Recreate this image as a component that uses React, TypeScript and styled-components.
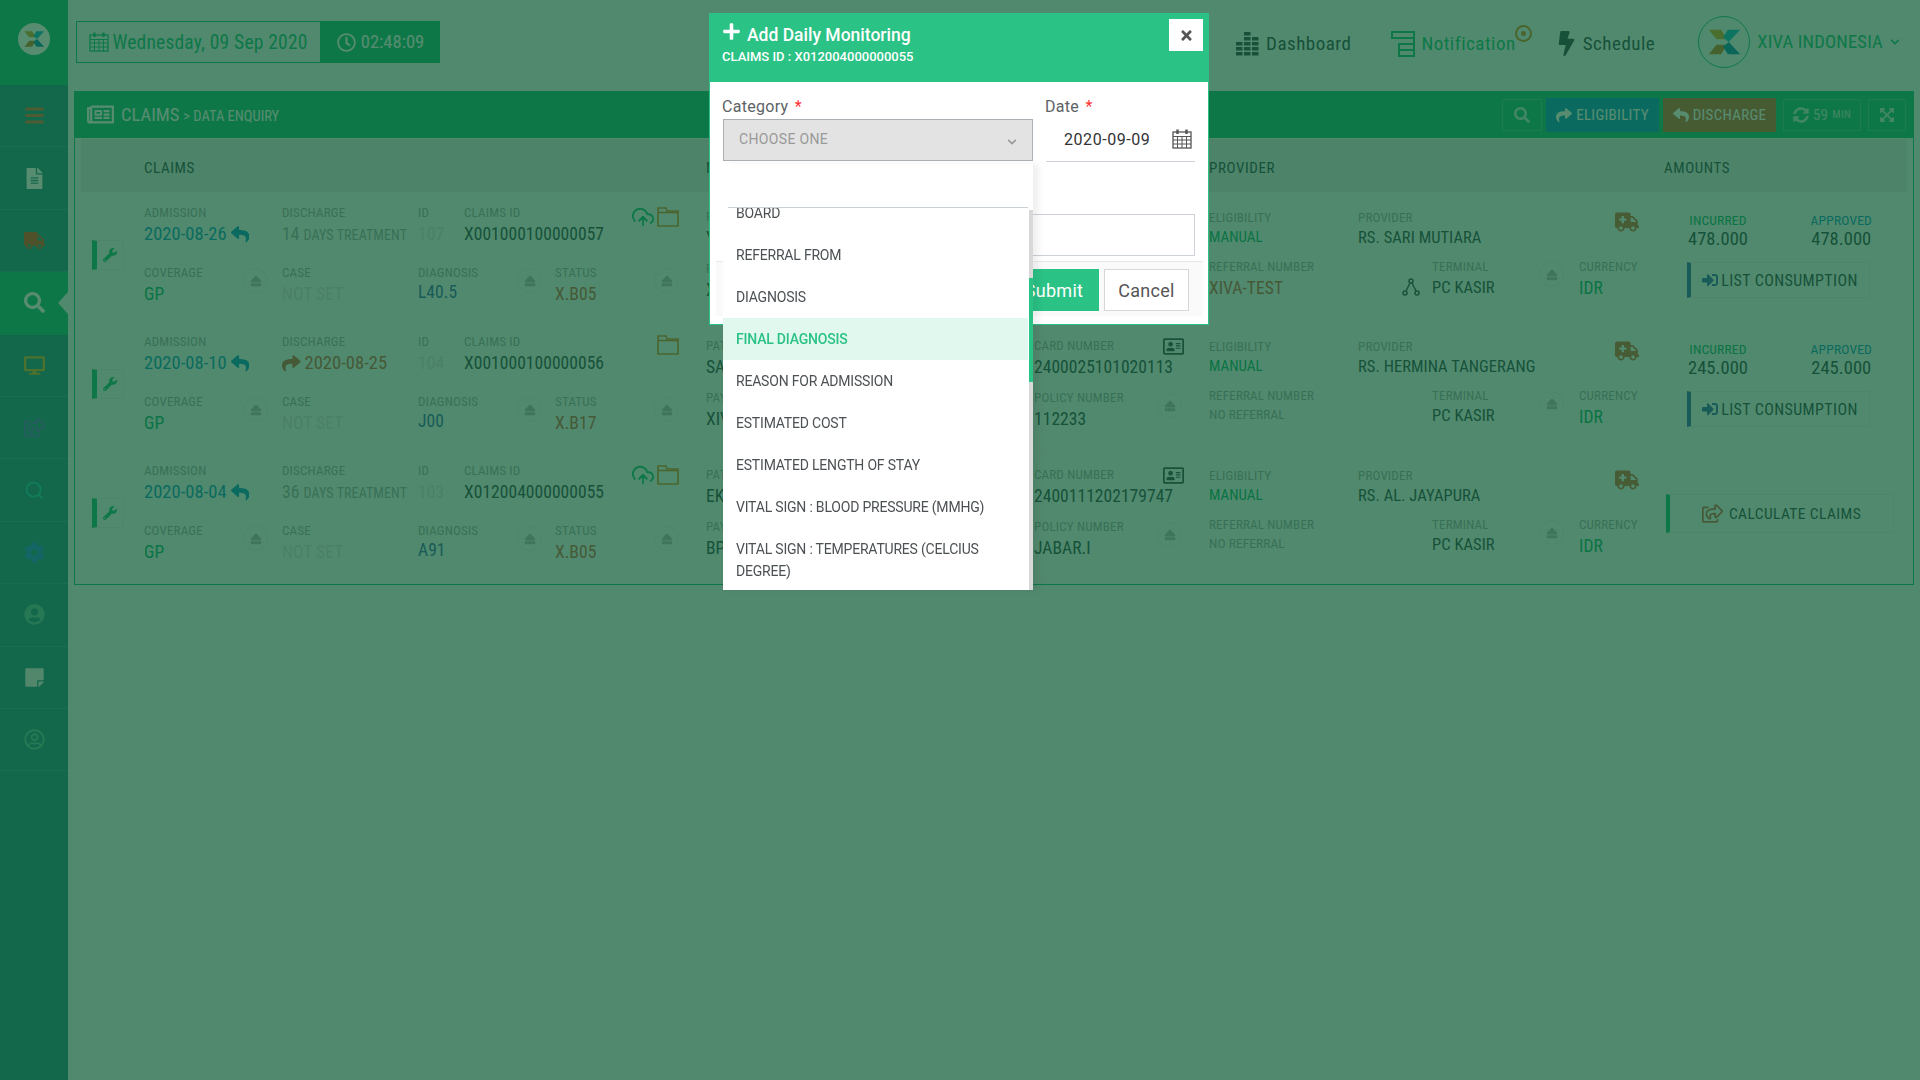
import React from 'react';
import styled, { createGlobalStyle } from 'styled-components';
import {
  FaBars, FaBolt, FaCog, FaDesktop, FaEject, FaExpandArrowsAlt, FaFileAlt, FaPlus,
  FaRegAddressCard, FaRegClock, FaRegNewspaper, FaRegShareSquare, FaRegUserCircle, FaReply,
  FaSearch, FaShare, FaSignInAlt, FaStickyNote, FaSyncAlt, FaTimes, FaTruck, FaUserCircle, FaWrench,
  FaAmbulance, FaChevronDown,
} from 'react-icons/fa';
import { FiUploadCloud, FiSearch } from 'react-icons/fi';

const primary = '#2bc286';
const pageBg = '#eef5f6';
const narrow = 'Roboto, "Open Sans", sans-serif';
const soft = 'Roboto, "Noto Sans", sans-serif';

const tones: Record<string, string> = {
  blue: '#1f9cc9',
  green: '#22b67c',
  navy: '#4a6fb5',
  red: '#c96a55',
  dark: '#44545c',
  grey: '#a5adb0',
  faint: '#d8dcde',
};

const GlobalStyle = createGlobalStyle`
  html, body { margin: 0; padding: 0; height: 100%; overflow: hidden; }
  body { background: ${pageBg}; font-family: ${narrow}; font-stretch: 75%; color: #44545c; }
  * { box-sizing: border-box; }
`;

const Page = styled.div`
  display: flex;
  width: 1920px;
  height: 1080px;
`;

const Sidebar = styled.aside`
  width: 68px;
  flex: none;
  background: #3a9490;
`;

const SideLogo = styled.div`
  height: 85px;
  background: ${primary};
  display: flex;
  align-items: flex-start;
  justify-content: center;
  padding-top: 23px;
`;

const LogoDisc = styled.div`
  width: 32px;
  height: 32px;
  border-radius: 50%;
  background: #fff;
  display: flex;
  align-items: center;
  justify-content: center;
`;

const SideItem = styled.div<{ $active?: boolean; $color: string }>`
  position: relative;
  height: 62.4px;
  display: flex;
  align-items: center;
  justify-content: center;
  color: ${(p) => p.$color};
  font-size: 21px;
  background: ${(p) => (p.$active ? primary : 'transparent')};
  border-bottom: 1px solid ${(p) => (p.$active ? primary : '#4ea69c')};
  ${(p) =>
    p.$active &&
    `&::after {
      content: '';
      position: absolute;
      right: 0;
      top: 20px;
      border-style: solid;
      border-width: 11px 10px 11px 0;
      border-color: transparent ${pageBg} transparent transparent;
    }`}
`;

const Main = styled.main`
  flex: 1;
  min-width: 0;
  padding-right: 6px;
`;

const TopBar = styled.header`
  height: 91px;
  display: flex;
  align-items: flex-start;
  padding: 21px 0 0 8px;
`;

const DateBox = styled.div`
  width: 245px;
  height: 42px;
  border: 1px solid ${primary};
  display: flex;
  align-items: center;
  justify-content: center;
  gap: 3px;
  color: ${primary};
  font-size: 19.5px;
  letter-spacing: 0.2px;
  white-space: nowrap;
`;

const TimeBox = styled(DateBox)`
  width: 119px;
  background: ${primary};
  color: #fff;
  gap: 5px;
  font-size: 18.5px;
  letter-spacing: 0;
`;

const Nav = styled.nav`
  margin-left: auto;
  display: flex;
  align-items: center;
  height: 42px;
  margin-right: 14px;
`;

const NavLink = styled.div<{ $color: string; $gap: number; $left: number }>`
  display: flex;
  align-items: center;
  gap: ${(p) => p.$gap}px;
  margin-left: ${(p) => p.$left}px;
  color: ${(p) => p.$color};
  font-size: 19px;
  letter-spacing: 0.5px;
  padding-top: 3px;
`;

const NavDot = styled.span`
  width: 17px;
  height: 17px;
  border-radius: 50%;
  border: 2px solid #d98a3a;
  display: flex;
  align-items: center;
  justify-content: center;
  margin: -20px 0 0 -7px;
  &::after {
    content: '';
    width: 5px;
    height: 5px;
    border-radius: 50%;
    background: #d98a3a;
  }
`;

const Brand = styled.div`
  display: flex;
  align-items: center;
  gap: 7px;
  margin-left: 43px;
  color: ${primary};
  font-size: 18.5px;
  letter-spacing: 0.2px;
`;

const BrandRing = styled.div`
  width: 52px;
  height: 52px;
  border-radius: 50%;
  border: 1px solid ${primary};
  display: flex;
  align-items: center;
  justify-content: center;
`;

const Panel = styled.section`
  margin-left: 6px;
  height: 494px;
  display: flex;
  flex-direction: column;
  border: 1px solid ${primary};
  border-top: none;
`;

const PanelHead = styled.div`
  height: 47px;
  margin: 0 -1px;
  background: ${primary};
  color: #fff;
  display: flex;
  align-items: center;
  padding: 0 8px 0 13px;
`;

const Crumb = styled.div`
  display: flex;
  align-items: center;
  gap: 7px;
  font-size: 18.5px;
  flex: 1;
  small {
    font-size: 14.5px;
    margin-left: -3px;
    padding-top: 3px;
  }
`;

const HeadButton = styled.div<{ $bg?: string; $w: number }>`
  width: ${(p) => p.$w}px;
  height: ${(p) => (p.$bg ? 34 : 32)}px;
  margin-left: ${(p) => (p.$bg ? 4 : 7)}px;
  background: ${(p) => p.$bg || 'transparent'};
  color: ${(p) => (p.$bg ? '#fff' : 'rgba(255,255,255,.7)')};
  border: ${(p) => (p.$bg ? 'none' : '1px solid rgba(255,255,255,.2)')};
  display: flex;
  align-items: center;
  justify-content: center;
  gap: 4px;
  font-size: 15px;
  letter-spacing: 0.3px;
  svg { font-size: 16px; }
  small { font-size: 11px; }
`;

const TableHead = styled.div`
  height: 53px;
  margin: 1px 6px 0;
  background: #e2e5e7;
  display: flex;
  align-items: center;
  font-size: 15px;
  letter-spacing: 0.6px;
  color: #44545c;
  padding-top: 4px;
`;

const HeadCell = styled.div<{ $w: number; $pad: number }>`
  width: ${(p) => p.$w}px;
  padding-left: ${(p) => p.$pad}px;
`;

const Row = styled.div`
  height: 129px;
  margin: 0 6px;
  display: flex;
  border-bottom: 1px solid #eceff0;
`;

const ToolCell = styled.div`
  width: 50px;
  padding: 48px 0 0 11px;
`;

const ToolButton = styled.div`
  width: 32px;
  height: 30px;
  border: 1px solid #e3e6e8;
  border-left: 5px solid ${primary};
  display: flex;
  align-items: center;
  justify-content: center;
  color: ${primary};
  font-size: 14px;
`;

const ClaimsCell = styled.div`
  position: relative;
  width: 565px;
  padding: 14px 0 0 12px;
  border-left: 1px solid #eceff0;
`;

const Fields = styled.div<{ $cols: string; $h: number }>`
  display: grid;
  grid-template-columns: ${(p) => p.$cols};
  height: ${(p) => p.$h}px;
`;

const Label = styled.div`
  font-size: 13px;
  line-height: 14px;
  letter-spacing: 0.2px;
  color: #a5adb0;
  white-space: nowrap;
`;

const Value = styled.div<{ $tone?: string; $size?: number; $top?: number }>`
  margin-top: ${(p) => p.$top ?? 3}px;
  font-size: ${(p) => p.$size || 17.5}px;
  line-height: 22px;
  letter-spacing: 0.05px;
  color: ${(p) => tones[p.$tone || 'dark']};
  white-space: nowrap;
  display: flex;
  align-items: center;
  gap: 4px;
  small {
    font-size: 14px;
    color: #a5adb0;
    letter-spacing: 0.1px;
  }
`;

const EjectField = styled.div`
  display: flex;
  justify-content: space-between;
  width: 124px;
`;

const EjectBadge = styled.span`
  width: 25px;
  height: 25px;
  margin-top: 2px;
  border-radius: 50%;
  border: 1px solid #e6e9ea;
  display: flex;
  align-items: center;
  justify-content: center;
  color: #b5bcbf;
  font-size: 12px;
  flex: none;
`;

const RowTools = styled.div`
  position: absolute;
  right: 17px;
  top: 14px;
  display: flex;
  align-items: center;
  gap: 3px;
  font-size: 22px;
`;

const MemberCell = styled.div`
  width: 502px;
  padding: 18px 0 0 9px;
  border-left: 1px solid #eceff0;
`;

const CardField = styled.div`
  display: grid;
  grid-template-columns: minmax(0, 1fr) auto;
  align-items: start;
  width: 148px;
`;

const CardIcon = styled.span`
  color: #44545c;
  font-size: 21px;
  line-height: 20px;
  margin-top: -3px;
  margin-right: -2px;
`;

const ProviderCell = styled.div`
  width: 453px;
  padding: 19px 0 0 10px;
  border-left: 1px solid #eceff0;
`;

const Ambulance = styled.span`
  color: #d0704f;
  font-size: 24px;
  margin-top: -1px;
  justify-self: end;
  padding-right: 12px;
`;

const TerminalField = styled.div`
  display: flex;
  width: 162px;
  justify-content: space-between;
`;

const Terminal = styled.div`
  display: grid;
  grid-template-columns: 30px auto;
  align-content: start;
`;

const NodeSlot = styled.span`
  padding-top: 4px;
`;

const AmountCell = styled.div`
  width: 256px;
  border-left: 1px solid #eceff0;
  padding-top: 21px;
`;

const AmountRow = styled.div`
  display: flex;
  justify-content: space-between;
  padding: 0 35px 0 36px;
`;

const Amount = styled.div<{ $tone: string }>`
  text-align: center;
  ${Label} { color: ${(p) => tones[p.$tone]}; font-size: 13.5px; }
  ${Value} { justify-content: center; margin-top: 1px; font-size: 18.5px; }
`;

const ListButton = styled.div`
  width: 183px;
  height: 36px;
  margin: 12px 0 0 35px;
  border: 1px solid #e3e6e8;
  border-left: 4px solid ${tones.navy};
  display: flex;
  align-items: center;
  justify-content: center;
  gap: 3px;
  font-size: 16px;
  letter-spacing: 0.4px;
  white-space: nowrap;
  svg { color: ${tones.navy}; }
`;

const CalcButton = styled(ListButton)`
  width: 228px;
  height: 39px;
  margin: 23px 0 0 14px;
  border-left-color: ${primary};
  gap: 6px;
  font-size: 15.5px;
  svg { color: ${tones.red}; font-size: 21px; }
`;

const Backdrop = styled.div`
  position: fixed;
  inset: 0;
  background: rgba(0, 80, 40, 0.66);
`;

const Modal = styled.div`
  position: fixed;
  left: 709px;
  top: 13px;
  width: 500px;
  height: 312px;
  background: #fff;
  border: 1px solid ${primary};
  font-family: ${soft};
  font-stretch: 100%;
  color: #555;
`;

const ModalHead = styled.div`
  height: 68px;
  background: ${primary};
  color: #fff;
  display: flex;
  justify-content: space-between;
  padding: 5px 5px 0 12px;
`;

const ModalTitle = styled.div`
  display: flex;
  align-items: flex-start;
  gap: 6px;
  font-size: 17.5px;
  font-weight: 500;
  line-height: 24px;
  padding-top: 4px;
  svg { font-size: 19px; margin-top: -1px; }
`;

const ModalSub = styled.div`
  font-size: 13px;
  font-weight: 500;
  line-height: 16px;
  margin-top: 2px;
`;

const CloseButton = styled.div`
  width: 34px;
  height: 32px;
  background: #fff;
  color: #555;
  display: flex;
  align-items: center;
  justify-content: center;
  font-size: 15px;
`;

const ModalForm = styled.div`
  display: grid;
  grid-template-columns: 310px 149px;
  column-gap: 13px;
  padding: 12px 0 0 13px;
`;

const FormLabel = styled.div`
  font-size: 16px;
  line-height: 25px;
  margin-left: -1px;
  color: #5d6366;
  letter-spacing: 0.3px;
  b {
    color: #f33;
    font-weight: 400;
    margin-left: 2px;
  }
`;

const SelectBox = styled.div`
  height: 42px;
  background: #e3e3e3;
  border: 1px solid #aab0b3;
  display: flex;
  align-items: center;
  justify-content: space-between;
  padding: 0 15px 2px;
  font-size: 14px;
  letter-spacing: 0.35px;
  color: #999;
  svg { font-size: 10px; margin-top: 5px; }
`;

const DateInput = styled.div`
  height: 43px;
  border-bottom: 1px solid #ccd2d8;
  display: flex;
  align-items: center;
  justify-content: space-between;
  padding: 0 3px 2px 18px;
  font-size: 16px;
  letter-spacing: 0.55px;
  color: #333;
`;

const NoteInput = styled.div`
  grid-column: 1 / 3;
  height: 42px;
  margin-top: 52px;
  border: 1px solid #ccd2d8;
`;

const ModalFoot = styled.div`
  margin: 5px 5px 0 6px;
  height: 55px;
  border-top: 1px solid #e8e8e8;
  background: #fafafa;
  display: flex;
  justify-content: flex-end;
  align-items: flex-start;
  gap: 5px;
  padding: 7px 14px 0 0;
`;

const SubmitButton = styled.div`
  width: 90px;
  height: 42px;
  background: ${primary};
  color: #fff;
  font-size: 18px;
  display: flex;
  align-items: center;
  justify-content: center;
  letter-spacing: 0.3px;
`;

const CancelButton = styled(SubmitButton)`
  width: 85px;
  background: #fff;
  color: #555;
  border: 1px solid #d5d8da;
`;

const Dropdown = styled.div`
  position: absolute;
  left: 13px;
  top: 150px;
  width: 310px;
  height: 426px;
  background: #fff;
  box-shadow: 6px 0 6px rgba(0, 0, 0, 0.06);
  display: flex;
  flex-direction: column;
`;

const SearchBox = styled.div`
  height: 44px;
  flex: none;
  margin: 0 5px;
  border-bottom: 1px solid #c8d0d6;
`;

const OptionList = styled.div`
  position: relative;
  flex: 1;
  overflow: hidden;
  padding-right: 5px;
`;

const Options = styled.div`
  margin-top: -16px;
`;

const Option = styled.div<{ $active?: boolean }>`
  min-height: 42px;
  padding: 10px 13px;
  font-size: 14px;
  line-height: 22px;
  letter-spacing: -0.2px;
  color: ${(p) => (p.$active ? primary : '#4c5154')};
  font-weight: ${(p) => (p.$active ? 500 : 400)};
  background: ${(p) => (p.$active ? '#e1f8ee' : 'transparent')};
  display: flex;
  align-items: center;
`;

const ScrollTrack = styled.div`
  position: absolute;
  right: 0;
  top: 2px;
  bottom: 0;
  width: 4px;
  background: #d8d8d8;
`;

const ScrollThumb = styled.div`
  margin-top: 68px;
  height: 104px;
  background: ${primary};
`;

const Logo: React.FC<{ size: number }> = ({ size }) => (
  <svg width={size} height={size} viewBox="0 0 40 40">
    <polygon points="4,7 17,7 23,17 12,17" fill="#d9a63a" />
    <polygon points="12,23 23,23 17,33 4,33" fill="#c9853a" />
    <polygon points="37,7 24,7 19,15 25,20" fill="#26b8d0" />
    <polygon points="25,20 19,25 24,33 37,33" fill="#1f8fb5" />
  </svg>
);

const DashIcon = () => (
  <svg width="24" height="24" viewBox="0 0 24 24" fill="#44545c">
    {[[8, 0], [8, 5], [8, 10], [8, 15], [8, 20], [0, 10], [0, 15], [0, 20], [16, 5], [16, 10], [16, 15], [16, 20]].map(([x, y]) => (
      <rect key={`${x}-${y}`} x={x} y={y} width="6.5" height="3.5" />
    ))}
  </svg>
);

const NotifIcon = () => (
  <svg width="24" height="26" viewBox="0 0 24 26" fill="none" stroke={primary} strokeWidth="2">
    <rect x="1" y="1" width="22" height="6" />
    <path d="M23 7 V25 H8 V19 H23 M8 19 V13 H23" />
  </svg>
);

const CalendarIcon: React.FC<{ size: number; color: string }> = ({ size, color }) => (
  <svg width={size} height={size} viewBox="0 0 20 20" fill="none" stroke={color} strokeWidth="1.3">
    <rect x="1" y="3" width="18" height="16" />
    <path d="M1 7.5 H19 M1 11 H19 M1 15 H19 M5.5 7.5 V19 M10 7.5 V19 M14.5 7.5 V19" strokeWidth="1" />
    <path d="M5.5 0.5 V5 M14.5 0.5 V5" strokeWidth="2.4" />
  </svg>
);

const FolderIcon = () => (
  <svg width="22" height="20" viewBox="0 0 22 20" fill="none" stroke="#d98a3a" strokeWidth="1.6">
    <path d="M1 1 H9 L10 4 H21 V19 H1 Z" />
    <path d="M1 5.5 H21" />
  </svg>
);

const NodeIcon = () => (
  <svg width="18" height="18" viewBox="0 0 18 18" fill="none" stroke="#44545c" strokeWidth="1.5">
    <circle cx="9" cy="3" r="2" />
    <circle cx="3" cy="15" r="2" />
    <circle cx="15" cy="15" r="2" />
    <path d="M8 5 L4 13 M10 5 L14 13" />
  </svg>
);

type RowData = {
  admission: string;
  discharge?: [string, string];
  dischargeDate?: string;
  id: string;
  claimId: string;
  upload: boolean;
  diagnosis: string;
  status: string;
  patient: string;
  payor: string;
  card: string;
  policy: string;
  provider: string;
  referral?: string;
  amount?: string;
};

const rows: RowData[] = [
  { admission: '2020-08-26', discharge: ['14', 'DAYS TREATMENT'], id: '107', claimId: 'X001000100000057', upload: true, diagnosis: 'L40.5', status: 'X.B05', patient: 'YUSUF', payor: 'XIVA', card: '2400025101020100', policy: '112200', provider: 'RS. SARI MUTIARA', referral: 'XIVA-TEST', amount: '478.000' },
  { admission: '2020-08-10', dischargeDate: '2020-08-25', id: '104', claimId: 'X001000100000056', upload: false, diagnosis: 'J00', status: 'X.B17', patient: 'SARI', payor: 'XIVA', card: '2400025101020113', policy: '112233', provider: 'RS. HERMINA TANGERANG', amount: '245.000' },
  { admission: '2020-08-04', discharge: ['36', 'DAYS TREATMENT'], id: '103', claimId: 'X012004000000055', upload: true, diagnosis: 'A91', status: 'X.B05', patient: 'EKO', payor: 'BPJS', card: '2400111202179747', policy: 'JABAR.I', provider: 'RS. AL. JAYAPURA' },
];

const options = [
  'BOARD',
  'REFERRAL FROM',
  'DIAGNOSIS',
  'FINAL DIAGNOSIS',
  'REASON FOR ADMISSION',
  'ESTIMATED COST',
  'ESTIMATED LENGTH OF STAY',
  'VITAL SIGN : BLOOD PRESSURE (MMHG)',
  'VITAL SIGN : TEMPERATURES (CELCIUS DEGREE)',
];

const sideItems = [
  { icon: <FaBars />, color: '#e8734a' },
  { icon: <FaFileAlt />, color: '#ffffff' },
  { icon: <FaTruck />, color: '#e8542f' },
  { icon: <FaSearch />, color: '#ffffff', active: true },
  { icon: <FaDesktop />, color: '#e2b23a' },
  { icon: <FaRegShareSquare />, color: '#6c74c9' },
  { icon: <FiSearch />, color: '#2fd0c0' },
  { icon: <FaCog />, color: '#3a8fd9' },
  { icon: <FaUserCircle />, color: '#6cc4a8' },
  { icon: <FaStickyNote />, color: '#f0f0f0' },
  { icon: <FaRegUserCircle />, color: '#6cc4a8' },
];

const ClaimRow: React.FC<{ row: RowData }> = ({ row }) => (
  <Row>
    <ToolCell>
      <ToolButton><FaWrench /></ToolButton>
    </ToolCell>
    <ClaimsCell>
      <Fields $cols="138px 136px 46px 1fr" $h={60}>
        <div>
          <Label>ADMISSION</Label>
          <Value $tone="blue" $size={18.5}>{row.admission} <FaReply /></Value>
        </div>
        <div>
          <Label>DISCHARGE</Label>
          {row.discharge ? (
            <Value $tone="grey"><span>{row.discharge[0]} <small>{row.discharge[1]}</small></span></Value>
          ) : (
            <Value $tone="red" $size={18.5}><FaShare /> {row.dischargeDate}</Value>
          )}
        </div>
        <div>
          <Label>ID</Label>
          <Value $tone="faint">{row.id}</Value>
        </div>
        <div>
          <Label>CLAIMS ID</Label>
          <Value>{row.claimId}</Value>
        </div>
      </Fields>
      <Fields $cols="138px 136px 137px 1fr" $h={55}>
        <EjectField>
          <div>
            <Label>COVERAGE</Label>
            <Value $tone="green">GP</Value>
          </div>
          <EjectBadge><FaEject /></EjectBadge>
        </EjectField>
        <div>
          <Label>CASE</Label>
          <Value $tone="faint">NOT SET</Value>
        </div>
        <EjectField>
          <div>
            <Label>DIAGNOSIS</Label>
            <Value $tone="navy" $top={1}>{row.diagnosis}</Value>
          </div>
          <EjectBadge><FaEject /></EjectBadge>
        </EjectField>
        <EjectField>
          <div>
            <Label>STATUS</Label>
            <Value $tone="red">{row.status}</Value>
          </div>
          <EjectBadge><FaEject /></EjectBadge>
        </EjectField>
      </Fields>
      <RowTools>
        {row.upload && <FiUploadCloud color={primary} />}
        <FolderIcon />
      </RowTools>
    </ClaimsCell>
    <MemberCell>
      <Fields $cols="328px 148px" $h={52}>
        <div>
          <Label>PATIENT</Label>
          <Value>{row.patient}</Value>
        </div>
        <CardField>
          <div>
            <Label>CARD NUMBER</Label>
            <Value>{row.card}</Value>
          </div>
          <CardIcon><FaRegAddressCard /></CardIcon>
        </CardField>
      </Fields>
      <Fields $cols="328px 148px" $h={54}>
        <div>
          <Label>PAYOR</Label>
          <Value>{row.payor}</Value>
        </div>
        <CardField>
          <div>
            <Label>POLICY NUMBER</Label>
            <Value>{row.policy}</Value>
          </div>
          <EjectBadge><FaEject /></EjectBadge>
        </CardField>
      </Fields>
    </MemberCell>
    <ProviderCell>
      <Fields $cols="149px 1fr 60px" $h={49}>
        <div>
          <Label>ELIGIBILITY</Label>
          <Value $tone="green" $size={15} $top={1}>MANUAL</Value>
        </div>
        <div>
          <Label>PROVIDER</Label>
          <Value $size={16.5} $top={2}>{row.provider}</Value>
        </div>
        <Ambulance><FaAmbulance /></Ambulance>
      </Fields>
      <Fields $cols="193px 177px 1fr" $h={55}>
        <div>
          <Label>REFERRAL NUMBER</Label>
          {row.referral ? (
            <Value $tone="red">{row.referral}</Value>
          ) : (
            <Value $tone="grey" $size={13.5} $top={0}>NO REFERRAL</Value>
          )}
        </div>
        <TerminalField>
          <Terminal>
            <span />
            <Label>TERMINAL</Label>
            <NodeSlot>{row.referral && <NodeIcon />}</NodeSlot>
            <Value $size={16.5} $top={2}>PC KASIR</Value>
          </Terminal>
          <EjectBadge><FaEject /></EjectBadge>
        </TerminalField>
        <div>
          <Label>CURRENCY</Label>
          <Value $tone="green">IDR</Value>
        </div>
      </Fields>
    </ProviderCell>
    <AmountCell>
      {row.amount ? (
        <>
          <AmountRow>
            <Amount $tone="green">
              <Label>INCURRED</Label>
              <Value>{row.amount}</Value>
            </Amount>
            <Amount $tone="blue">
              <Label>APPROVED</Label>
              <Value>{row.amount}</Value>
            </Amount>
          </AmountRow>
          <ListButton><FaSignInAlt /> LIST CONSUMPTION</ListButton>
        </>
      ) : (
        <CalcButton><FaRegShareSquare /> CALCULATE CLAIMS</CalcButton>
      )}
    </AmountCell>
  </Row>
);

export default function App() {
  return (
    <Page>
      <GlobalStyle />
      <Sidebar>
        <SideLogo>
          <LogoDisc><Logo size={24} /></LogoDisc>
        </SideLogo>
        {sideItems.map((item, i) => (
          <SideItem key={i} $color={item.color} $active={item.active}>{item.icon}</SideItem>
        ))}
      </Sidebar>
      <Main>
        <TopBar>
          <DateBox><CalendarIcon size={20} color={primary} /> Wednesday, 09 Sep 2020</DateBox>
          <TimeBox><FaRegClock size={19} /> 02:48:09</TimeBox>
          <Nav>
            <NavLink $color="#44545c" $gap={6} $left={0}><DashIcon /> Dashboard</NavLink>
            <NavLink $color={primary} $gap={6} $left={40}><NotifIcon /> Notification <NavDot /></NavLink>
            <NavLink $color="#44545c" $gap={4} $left={22}><FaBolt size={25} /> Schedule</NavLink>
            <Brand>
              <BrandRing><Logo size={38} /></BrandRing>
              XIVA INDONESIA
              <FaChevronDown size={10} />
            </Brand>
          </Nav>
        </TopBar>
        <Panel>
          <PanelHead>
            <Crumb>
              <FaRegNewspaper size={27} />
              CLAIMS <small>&gt; DATA ENQUIRY</small>
            </Crumb>
            <HeadButton $w={40}><FaSearch /></HeadButton>
            <HeadButton $w={113} $bg="#1f9cc9"><FaShare /> ELIGIBILITY</HeadButton>
            <HeadButton $w={113} $bg="#cf6f4a"><FaReply /> DISCHARGE</HeadButton>
            <HeadButton $w={78}><FaSyncAlt /> 59 <small>MIN</small></HeadButton>
            <HeadButton $w={38}><FaExpandArrowsAlt /></HeadButton>
          </PanelHead>
          <TableHead>
            <HeadCell $w={50} $pad={0} />
            <HeadCell $w={565} $pad={13}>CLAIMS</HeadCell>
            <HeadCell $w={502} $pad={10}>MEMBER</HeadCell>
            <HeadCell $w={453} $pad={11}>PROVIDER</HeadCell>
            <HeadCell $w={256} $pad={13}>AMOUNTS</HeadCell>
          </TableHead>
          {rows.map((row) => (
            <ClaimRow key={row.id} row={row} />
          ))}
        </Panel>
      </Main>
      <Backdrop />
      <Modal>
        <ModalHead>
          <div>
            <ModalTitle><FaPlus /> Add Daily Monitoring</ModalTitle>
            <ModalSub>CLAIMS ID : X012004000000055</ModalSub>
          </div>
          <CloseButton><FaTimes /></CloseButton>
        </ModalHead>
        <ModalForm>
          <div>
            <FormLabel>Category <b>*</b></FormLabel>
            <SelectBox>CHOOSE ONE <FaChevronDown /></SelectBox>
          </div>
          <div>
            <FormLabel>Date <b>*</b></FormLabel>
            <DateInput>2020-09-09 <CalendarIcon size={20} color="#555" /></DateInput>
          </div>
          <NoteInput />
        </ModalForm>
        <ModalFoot>
          <SubmitButton>Submit</SubmitButton>
          <CancelButton>Cancel</CancelButton>
        </ModalFoot>
        <Dropdown>
          <SearchBox />
          <OptionList>
            <Options>
              {options.map((o) => (
                <Option key={o} $active={o === 'FINAL DIAGNOSIS'}>{o}</Option>
              ))}
            </Options>
            <ScrollTrack><ScrollThumb /></ScrollTrack>
          </OptionList>
        </Dropdown>
      </Modal>
    </Page>
  );
}
